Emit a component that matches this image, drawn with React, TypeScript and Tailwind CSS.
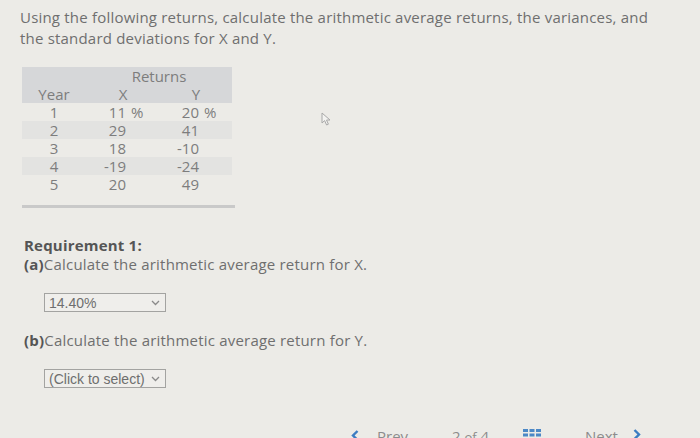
import React from "react";

const rows = [
  { y: "1", x: "11", xp: "%", yv: "20", yp: "%" },
  { y: "2", x: "29", xp: "", yv: "41", yp: "" },
  { y: "3", x: "18", xp: "", yv: "-10", yp: "" },
  { y: "4", x: "-19", xp: "", yv: "-24", yp: "" },
  { y: "5", x: "20", xp: "", yv: "49", yp: "" },
];

function Chevron() {
  return (
    <svg width="9" height="6" viewBox="0 0 9 6" className="shrink-0">
      <path d="M1 1 L4.5 4.5 L8 1" fill="none" stroke="#8a8a8a" strokeWidth="1.3" />
    </svg>
  );
}

function Select({ label }: { label: string }) {
  return (
    <div className="ml-[44px] flex h-[19px] w-[122px] items-center justify-between border border-[#a3a3a1] bg-[#efeeeb] pl-[4px] pr-[5px] font-['Liberation_Sans',Arial,sans-serif] text-[14px] leading-none text-[#6e6e6e]">
      <span>{label}</span>
      <Chevron />
    </div>
  );
}

export default function App() {
  return (
    <div className="relative h-[438px] w-[700px] overflow-hidden bg-[#ecebe7] font-['Open_Sans',sans-serif] text-[#6f6f6f]">
      <div className="pl-[20px] pt-[7px] text-[15px] leading-[21px] tracking-[0.2px]">
        <p>Using the following returns, calculate the arithmetic average returns, the variances, and</p>
        <p>the standard deviations for X and Y.</p>
      </div>

      <div className="ml-[22px] mt-[18px] w-[213px] text-[15px] leading-[18px] text-[#7d7d7d]">
        <div className="w-[210px] bg-[#d6d7d9]">
          <div className="grid h-[18px] grid-cols-[64px_146px] items-center">
            <span />
            <span className="text-center">Returns</span>
          </div>
          <div className="grid h-[18px] grid-cols-[64px_74px_72px] items-center">
            <span className="text-center">Year</span>
            <span className="text-center">X</span>
            <span className="text-center">Y</span>
          </div>
        </div>
        {rows.map((r, i) => (
          <div
            key={r.y}
            className={`grid h-[18px] w-[210px] grid-cols-[64px_40px_34px_39px_33px] items-center ${
              i % 2 === 1 ? "bg-[#e3e3e1]" : ""
            }`}
          >
            <span className="text-center">{r.y}</span>
            <span className="text-right">{r.x}</span>
            <span className="pl-[5px]">{r.xp}</span>
            <span className="text-right">{r.yv}</span>
            <span className="pl-[5px]">{r.yp}</span>
          </div>
        ))}
        <div className="mt-[12px] h-[3px] w-[213px] bg-[#c9c9c9]" />
      </div>

      <div className="absolute left-[321px] top-[112px]">
        <svg width="13" height="15" viewBox="0 0 13 15">
          <path
            d="M1 1 L1 11 L3.6 8.6 L5.6 13 L7.4 12.2 L5.5 8 L9 8 Z"
            fill="#f3f3f1"
            stroke="#a8a8a8"
            strokeWidth="1"
            strokeLinejoin="round"
          />
        </svg>
      </div>

      <div className="mt-[28px] pl-[24px] text-[15px] leading-[19px] tracking-[0.2px]">
        <p className="font-bold text-[#555]">Requirement 1:</p>
        <p>
          <span className="font-bold text-[#555]">(a)</span>Calculate the arithmetic average return for X.
        </p>
      </div>

      <div className="mt-[19px]">
        <Select label="14.40%" />
      </div>

      <div className="mt-[19px] pl-[24px] text-[15px] leading-[19px] tracking-[0.2px]">
        <p>
          <span className="font-bold text-[#555]">(b)</span>Calculate the arithmetic average return for Y.
        </p>
      </div>

      <div className="mt-[19px]">
        <Select label="(Click to select)" />
      </div>

      <div className="mt-[36px] flex h-[20px] items-start pl-[351px] text-[15px] leading-[20px] text-[#8c8c8c]">
        <div className="w-[26px] pt-[6px]">
          <svg width="8" height="11" viewBox="0 0 8 11">
            <path d="M6.5 1 L2 5.5 L6.5 10" fill="none" stroke="#3c7cc2" strokeWidth="2.4" />
          </svg>
        </div>
        <span className="w-[75px] pt-[2px]">Prev</span>
        <span className="w-[71px] pt-[2px]">
          2 <span className="text-[13px]">of</span> 4
        </span>
        <div className="w-[62px] pt-[5px]">
          <svg width="18" height="12" viewBox="0 0 18 12">
            <g fill="#4c88c6">
              <rect x="0" y="0" width="5" height="3" />
              <rect x="6.5" y="0" width="5" height="3" />
              <rect x="13" y="0" width="5" height="3" />
              <rect x="0" y="4.5" width="5" height="3" />
              <rect x="6.5" y="4.5" width="5" height="3" />
              <rect x="13" y="4.5" width="5" height="3" />
              <rect x="0" y="9" width="5" height="3" />
              <rect x="6.5" y="9" width="5" height="3" />
              <rect x="13" y="9" width="5" height="3" />
            </g>
          </svg>
        </div>
        <span className="w-[48px] pt-[2px]">Next</span>
        <div className="pt-[5px]">
          <svg width="8" height="11" viewBox="0 0 8 11">
            <path d="M1.5 1 L6 5.5 L1.5 10" fill="none" stroke="#3c7cc2" strokeWidth="2.4" />
          </svg>
        </div>
      </div>
    </div>
  );
}
